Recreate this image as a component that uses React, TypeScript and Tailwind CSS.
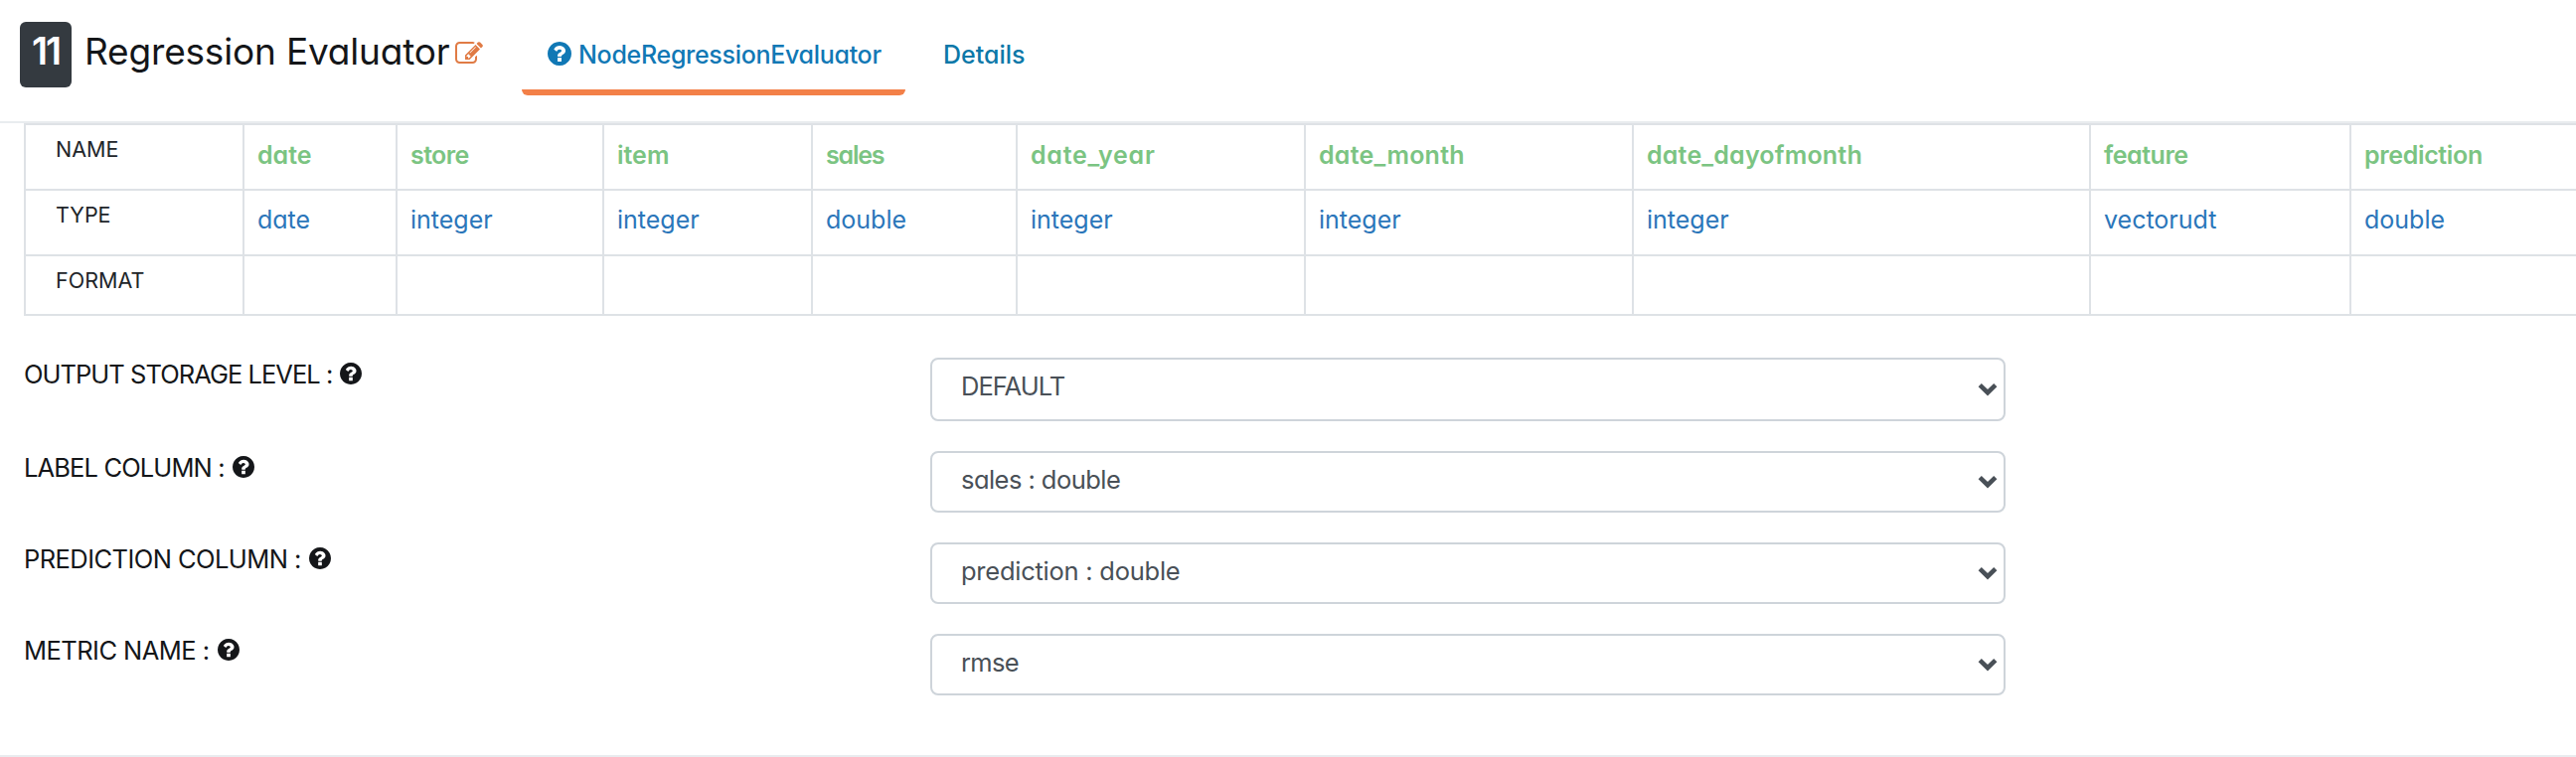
const FONT = "font-['Inter','Lato',sans-serif] [font-feature-settings:'cv11']";

function HelpIcon({ className }: { className: string }) {
  return (
    <svg viewBox="128 128 1536 1536" fill="currentColor" className={className} aria-hidden="true">
      <path d="M1024 1376v-192q0-14-9-23t-23-9h-192q-14 0-23 9t-9 23v192q0 14 9 23t23 9h192q14 0 23-9t9-23zm256-672q0-88-55.5-163t-138.5-116-170-41q-243 0-371 213-15 24 8 42l132 100q7 6 19 6 16 0 25-12 53-68 86-92 34-24 86-24 48 0 85.5 26t37.5 59q0 38-20 61t-68 45q-63 28-115.5 86.5t-52.5 125.5v36q0 14 9 23t23 9h192q14 0 23-9t9-23q0-19 21.5-49.5t54.5-49.5q32-18 49-28.5t46-35 44.5-48 28-60.5 12.5-81zm384 192q0 209-103 385.5t-279.5 279.5-385.5 103-385.5-103-279.5-279.5-103-385.5 103-385.5 279.5-279.5 385.5-103 385.5 103 279.5 279.5 103 385.5z" />
    </svg>
  );
}

function EditIcon({ className }: { className: string }) {
  return (
    <svg viewBox="0 128 1792 1408" fill="currentColor" className={className} aria-hidden="true">
      <path d="M888 1184l116-116-152-152-116 116v56h96v96h56zm440-720q-16-16-33 1l-350 350q-17 17-1 33t33-1l350-350q17-17 1-33zm80 594v190q0 119-84.5 203.5t-203.5 84.5h-832q-119 0-203.5-84.5t-84.5-203.5v-832q0-119 84.5-203.5t203.5-84.5h832q63 0 117 25 15 7 18 23 3 17-9 29l-49 49q-14 14-32 8-23-6-45-6h-832q-66 0-113 47t-47 113v832q0 66 47 113t113 47h832q66 0 113-47t47-113v-126q0-13 9-22l64-64q15-15 35-7t20 29zm-96-738l288 288-672 672h-288v-288zm444 132l-92 92-288-288 92-92q28-28 68-28t68 28l152 152q28 28 28 68t-28 68z" />
    </svg>
  );
}

const columns = [
  { name: "date", type: "date", width: "w-[154px]", nameStyle: "" },
  { name: "store", type: "integer", width: "w-[208px]", nameStyle: "tracking-[-0.6px]" },
  { name: "item", type: "integer", width: "w-[210px]", nameStyle: "" },
  { name: "sales", type: "double", width: "w-[206px]", nameStyle: "tracking-[-1.2px]" },
  { name: "date_year", type: "integer", width: "w-[290px]", nameStyle: "tracking-[0.75px]" },
  { name: "date_month", type: "integer", width: "w-[330px]", nameStyle: "tracking-[0.25px]" },
  { name: "date_dayofmonth", type: "integer", width: "w-[460px]", nameStyle: "tracking-[0.2px]" },
  { name: "feature", type: "vectorudt", width: "w-[262px]", nameStyle: "tracking-[-0.45px]" },
  { name: "prediction", type: "double", width: "w-[240px]", nameStyle: "tracking-[-0.35px]" },
];

const fields = [
  { label: "OUTPUT STORAGE LEVEL :", value: "DEFAULT", height: "h-16", labelStyle: "tracking-[-0.97px]", valueStyle: "tracking-[-0.95px]" },
  { label: "LABEL COLUMN :", value: "sales : double", height: "h-[62px]", labelStyle: "tracking-[-0.87px]", valueStyle: "tracking-[-0.55px]" },
  { label: "PREDICTION COLUMN :", value: "prediction : double", height: "h-[62px]", labelStyle: "tracking-[-0.56px]", valueStyle: "tracking-[-0.25px]" },
  { label: "METRIC NAME :", value: "rmse", height: "h-[62px]", labelStyle: "tracking-[-0.54px]", valueStyle: "tracking-[-0.7px]" },
];

function Header() {
  return (
    <header className="flex h-[124px] items-start border-b-2 border-[#e9ecef] pt-[22px] pl-5">
      <div className="h-[66px] w-[52px] rounded-md bg-[#343a40] text-center text-[38px] leading-[59px] font-semibold tracking-[-2px] text-white">
        11
      </div>
      <h1 className="ml-[13px] w-[370px] text-[37px] leading-[60px] tracking-[-0.18px] font-normal whitespace-nowrap text-[#141619]">
        Regression Evaluator
      </h1>
      <EditIcon className="mt-5 ml-[3px] h-[22px] w-7 text-[#e07b45]" />
      <nav className="ml-[39px] flex text-[25px] leading-[67px] font-medium whitespace-nowrap">
        <a className="flex h-[74px] w-[386px] rounded-b-md border-b-[6px] border-[#f38048] pl-[26px] text-[#1078b5]">
          <HelpIcon className="mt-5 mr-[7px] size-6 shrink-0" />
          <span className="tracking-[-0.3px]">NodeRegressionEvaluator</span>
        </a>
        <a className="pl-[38px] text-[#0c78a8]">Details</a>
      </nav>
    </header>
  );
}

function SchemaTable() {
  const heading = "w-[222px] shrink-0 border-x-2 border-[#dee2e6] pl-[30px] text-[21.5px] leading-[49px] text-[#212529]";
  return (
    <div className="ml-6 w-[2568px] overflow-hidden border-t-2 border-[#dee2e6] whitespace-nowrap">
      <div className="flex h-[66px] border-b-2 border-[#dee2e6]">
        <div className={heading}>NAME</div>
        {columns.map((c) => (
          <div key={c.name} className={`${c.width} shrink-0 border-r-2 border-[#dee2e6] pl-[13px] text-[25px] leading-[60px] font-semibold text-[#7bc482]`}>
            <span className={c.nameStyle}>{c.name}</span>
          </div>
        ))}
      </div>
      <div className="flex h-[66px] border-b-2 border-[#dee2e6]">
        <div className={heading}>TYPE</div>
        {columns.map((c) => (
          <div key={c.name} className={`${c.width} shrink-0 border-r-2 border-[#dee2e6] pl-[13px] text-[25px] leading-[59px] text-[#2b76ba]`}>
            {c.type}
          </div>
        ))}
      </div>
      <div className="flex h-[60px] border-b-2 border-[#dee2e6]">
        <div className={heading}>FORMAT</div>
        {columns.map((c) => (
          <div key={c.name} className={`${c.width} shrink-0 border-r-2 border-[#dee2e6]`} />
        ))}
      </div>
    </div>
  );
}

export default function App() {
  return (
    <div className={`flex h-[762px] w-[2592px] flex-col overflow-hidden border-b-2 border-[#e9ecef] bg-white ${FONT}`}>
      <Header />
      <SchemaTable />
      <form className="flex flex-col gap-[30px] pt-[42px] pl-6 text-[25.5px] whitespace-nowrap">
        {fields.map((f) => (
          <div key={f.label} className="flex items-start">
            <div className="flex w-[912px] leading-[34px] text-[#141619]">
              <span className={f.labelStyle}>{f.label}</span>
              <HelpIcon className="mt-[5px] ml-2 size-[22px]" />
            </div>
            <div className={`${f.height} flex w-[1082px] items-center justify-between rounded-lg border-2 border-[#ced4da] pr-[7px] pl-[29px] text-[#495057]`}>
              <span className={`${f.valueStyle} self-start leading-[53px]`}>{f.value}</span>
              <svg viewBox="0 0 18 12" className="h-3 w-[18px] overflow-visible" fill="none" stroke="currentColor" strokeWidth="4.6" aria-hidden="true">
                <path d="M1.2 1.600 9 9.200l7.800-7.600" />
              </svg>
            </div>
          </div>
        ))}
      </form>
    </div>
  );
}
